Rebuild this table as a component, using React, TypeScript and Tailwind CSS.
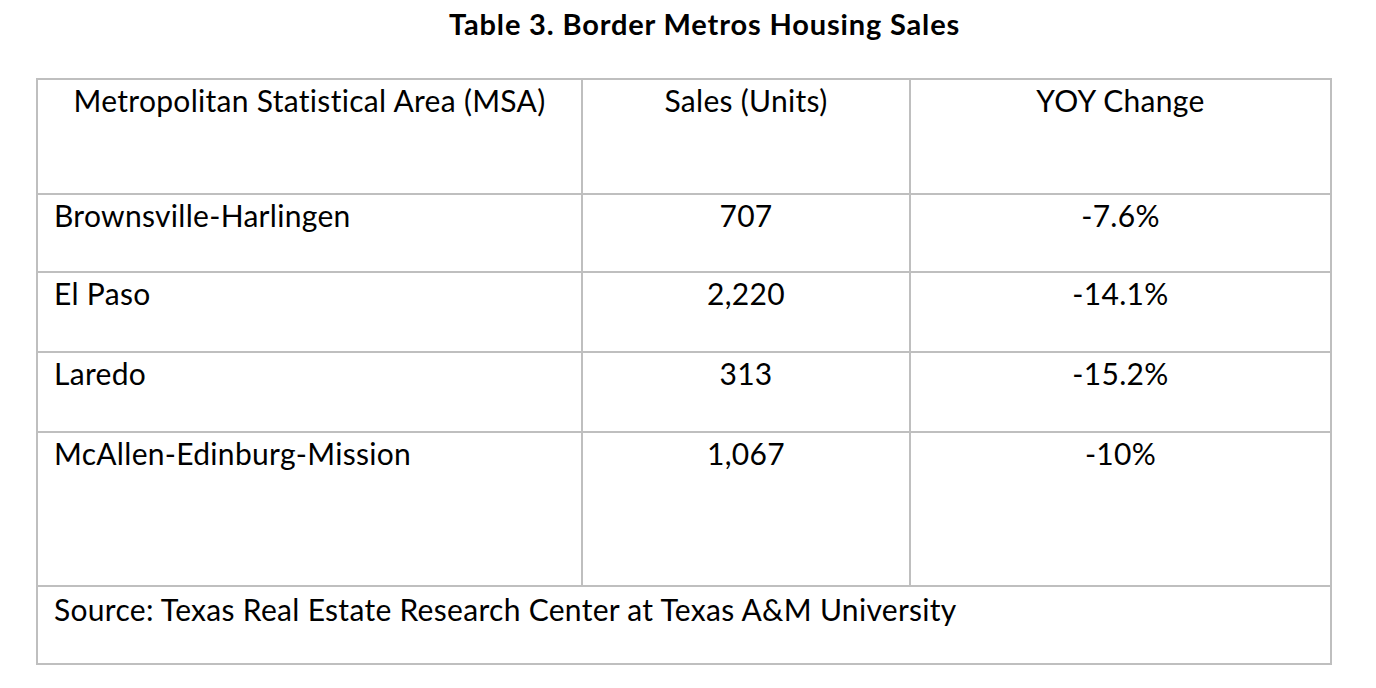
const rows = [
  { name: 'Brownsville-Harlingen', sales: '707', yoy: '-7.6%', h: 'h-[78px]' },
  { name: 'El Paso', sales: '2,220', yoy: '-14.1%', h: 'h-[80px]' },
  { name: 'Laredo', sales: '313', yoy: '-15.2%', h: 'h-[80px]' },
  { name: 'McAllen-Edinburg-Mission', sales: '1,067', yoy: '-10%', h: 'h-[154px]' },
]

const cell = 'border-r-2 border-b-2 border-[#bfbfbf] align-top p-0 pt-[2px] leading-[36px]'

export default function App() {
  return (
    <div className="min-h-[688px] w-[1376px] bg-white text-black" style={{ fontFamily: 'Lato, "Open Sans", sans-serif' }}>
      <div className="h-[78px] pl-[33px] pt-[6px] text-center text-[29px] font-bold leading-[36px] tracking-[0.85px]">
        Table 3. Border Metros Housing Sales
      </div>
      <table className="ml-[36px] w-[1296px] table-fixed border-separate border-spacing-0 border-l-2 border-t-2 border-[#bfbfbf] text-[30px] font-normal tracking-[0.3px]">
        <colgroup>
          <col className="w-[545px]" />
          <col className="w-[328px]" />
          <col className="w-[421px]" />
        </colgroup>
        <tbody>
          <tr className="h-[115px]">
            <td className={`${cell} text-center`}>Metropolitan Statistical Area (MSA)</td>
            <td className={`${cell} text-center`}>Sales (Units)</td>
            <td className={`${cell} text-center`}>YOY Change</td>
          </tr>
          {rows.map((r) => (
            <tr key={r.name} className={r.h}>
              <td className={`${cell} pl-[16px] text-left`}>{r.name}</td>
              <td className={`${cell} text-center`}>{r.sales}</td>
              <td className={`${cell} text-center`}>{r.yoy}</td>
            </tr>
          ))}
          <tr className="h-[78px]">
            <td colSpan={3} className={`${cell} pl-[16px] pt-[4px] text-left`}>
              Source: Texas Real Estate Research Center at Texas A&amp;M University
            </td>
          </tr>
        </tbody>
      </table>
    </div>
  )
}
